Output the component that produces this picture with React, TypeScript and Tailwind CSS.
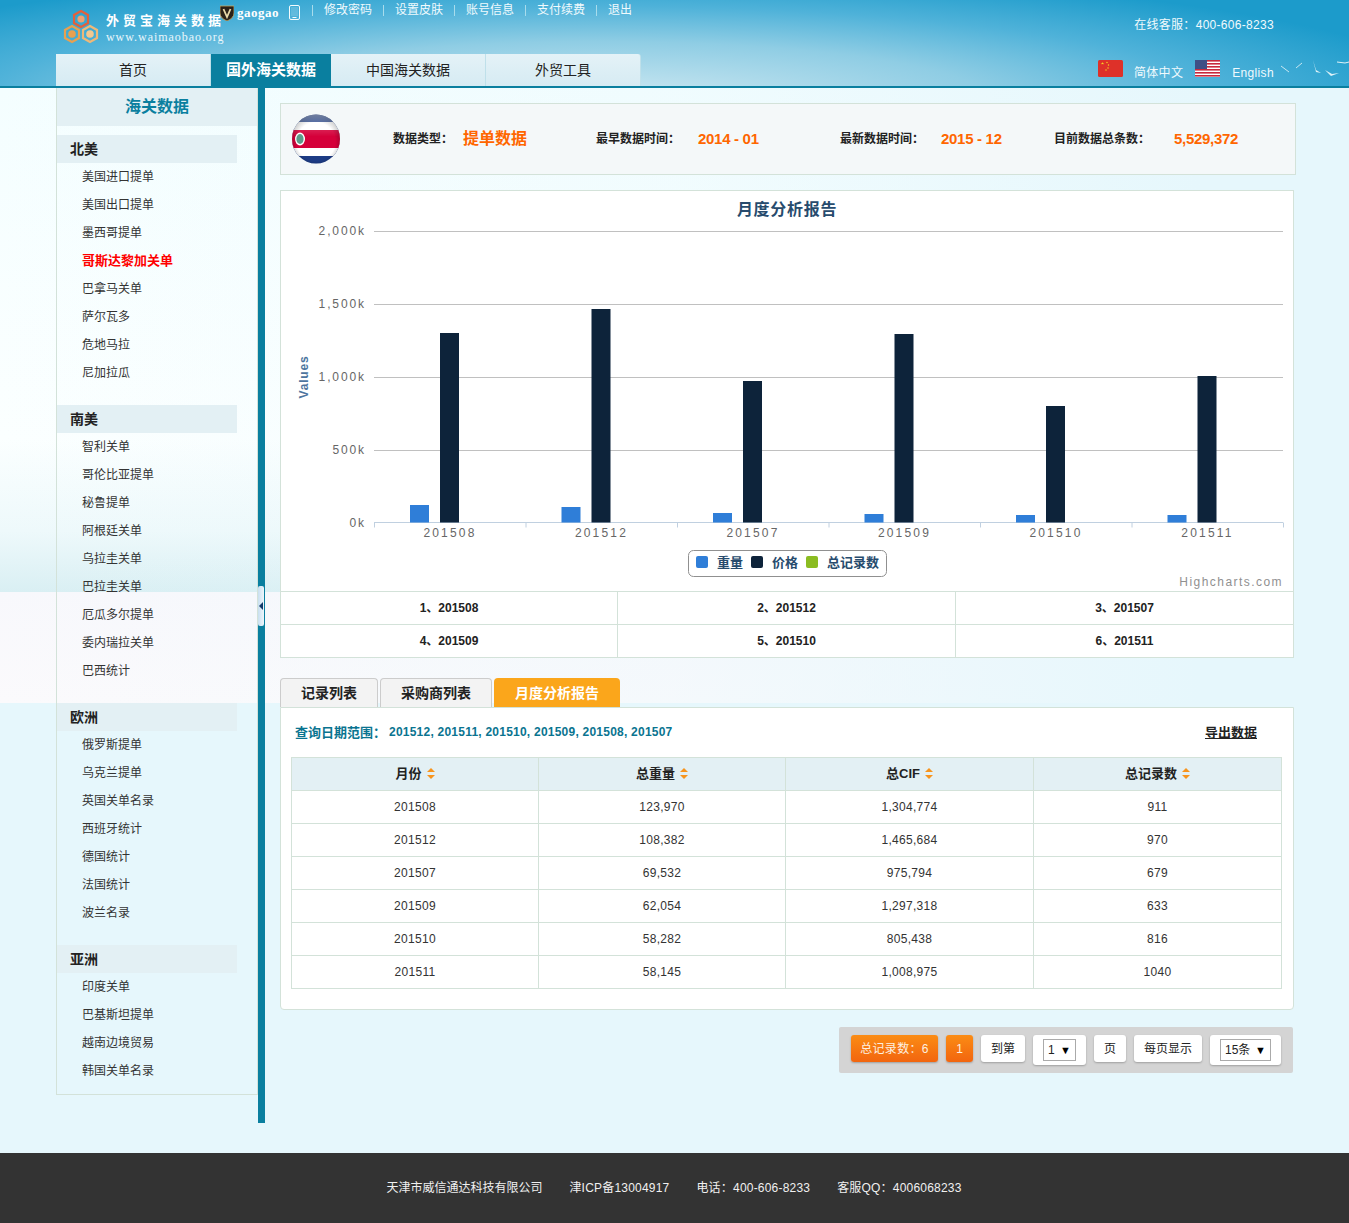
import React from "react";

const groups: { name: string; items: string[] }[] = [
  { name: "北美", items: ["美国进口提单", "美国出口提单", "墨西哥提单", "哥斯达黎加关单", "巴拿马关单", "萨尔瓦多", "危地马拉", "尼加拉瓜"] },
  { name: "南美", items: ["智利关单", "哥伦比亚提单", "秘鲁提单", "阿根廷关单", "乌拉圭关单", "巴拉圭关单", "厄瓜多尔提单", "委内瑞拉关单", "巴西统计"] },
  { name: "欧洲", items: ["俄罗斯提单", "乌克兰提单", "英国关单名录", "西班牙统计", "德国统计", "法国统计", "波兰名录"] },
  { name: "亚洲", items: ["印度关单", "巴基斯坦提单", "越南边境贸易", "韩国关单名录"] },
];

const rows = [
  ["201508", "123,970", "1,304,774", "911"],
  ["201512", "108,382", "1,465,684", "970"],
  ["201507", "69,532", "975,794", "679"],
  ["201509", "62,054", "1,297,318", "633"],
  ["201510", "58,282", "805,438", "816"],
  ["201511", "58,145", "1,008,975", "1040"],
];
const weights = [123970, 108382, 69532, 62054, 58282, 58145];
const prices = [1304774, 1465684, 975794, 1297318, 805438, 1008975];

function Bar({ x, value, fill }: { x: number; value: number; fill: string }) {
  const base = 331.5;
  const top = Math.ceil(base - value * (291.5 / 2000000));
  return <rect x={x} y={top} width="19" height={base - top} fill={fill} />;
}

function Chart() {
  const base = 331.5;
  const cw = 151.5;
  return (
    <svg width="1012" height="400" viewBox="0 0 1012 400" className="block">
      <text x="506" y="24" textAnchor="middle" fontSize="16" fontWeight="700" letterSpacing="0.7" fill="#274b6d">月度分析报告</text>
      {[0, 1, 2, 3].map((i) => (
        <line key={i} x1="93" x2="1002" y1={40.5 + i * 73} y2={40.5 + i * 73} stroke="#c0c0c0" />
      ))}
      {["2,000k", "1,500k", "1,000k", "500k", "0k"].map((t, i) => (
        <text key={t} x="85" y={44 + i * 73} textAnchor="end" fontSize="12" letterSpacing="1.9" fill="#666">{t}</text>
      ))}
      <text x="0" y="0" transform="translate(27 186) rotate(-90)" textAnchor="middle" fontSize="12" fontWeight="700" letterSpacing="0.8" fill="#4d759e">Values</text>
      <line x1="93" x2="1002" y1={base} y2={base} stroke="#c0d0e0" />
      {[0, 1, 2, 3, 4, 5, 6].map((i) => (
        <line key={i} x1={93.5 + i * cw} x2={93.5 + i * cw} y1={base} y2={base + 5} stroke="#c0d0e0" />
      ))}
      {rows.map((r, i) => (
        <g key={r[0]}>
          <Bar x={129 + i * cw} value={weights[i]} fill="#2f7ed8" />
          <Bar x={159 + i * cw} value={prices[i]} fill="#0d233a" />
          <text x={169 + i * cw} y="346" textAnchor="middle" fontSize="12" letterSpacing="2.2" fill="#666">{r[0]}</text>
        </g>
      ))}
      <rect x="407.5" y="359.5" width="198" height="26" rx="5" fill="#fff" stroke="#909090" />
      <rect x="415" y="365" width="12" height="12" rx="2" fill="#2f7ed8" />
      <text x="436" y="376" fontSize="13" fontWeight="700" fill="#274b6d">重量</text>
      <rect x="470" y="365" width="12" height="12" rx="2" fill="#0d233a" />
      <text x="491" y="376" fontSize="13" fontWeight="700" fill="#274b6d">价格</text>
      <rect x="525" y="365" width="12" height="12" rx="2" fill="#8bbc21" />
      <text x="546" y="376" fontSize="13" fontWeight="700" fill="#274b6d">总记录数</text>
      <text x="1002" y="395" textAnchor="end" fontSize="12" letterSpacing="1.45" fill="#909090">Highcharts.com</text>
    </svg>
  );
}

function Logo() {
  const hex = "M0 -8 L7 -4 L7 4 L0 8 L-7 4 L-7 -4 Z";
  return (
    <svg width="40" height="46" viewBox="0 0 40 46" className="block">
      <g transform="translate(19 11)"><path d={hex} fill="none" stroke="#e2603c" strokeWidth="2.2" /><circle r="3.6" fill="#f0a070" /></g>
      <g transform="translate(10 26)"><path d={hex} fill="none" stroke="#e8a050" strokeWidth="2.2" /><circle r="3.8" fill="#e8a050" /></g>
      <g transform="translate(28 26)"><path d={hex} fill="none" stroke="#efb878" strokeWidth="2.2" /><circle r="3.8" fill="#f3c890" /></g>
    </svg>
  );
}

function CostaRica() {
  return (
    <svg width="50" height="50" viewBox="0 0 50 50" className="block">
      <defs>
        <clipPath id="crc"><ellipse cx="25" cy="25" rx="24" ry="24.5" /></clipPath>
        <radialGradient id="crg" cx="50%" cy="55%" r="55%">
          <stop offset="70%" stopColor="#000" stopOpacity="0" />
          <stop offset="100%" stopColor="#000" stopOpacity="0.3" />
        </radialGradient>
        <linearGradient id="crs" x1="0" y1="0" x2="0" y2="1">
          <stop offset="0%" stopColor="#fff" stopOpacity="0.4" />
          <stop offset="45%" stopColor="#fff" stopOpacity="0" />
        </linearGradient>
      </defs>
      <g clipPath="url(#crc)">
        <rect width="50" height="50" fill="#1d3c85" />
        <rect y="8" width="50" height="34" fill="#fff" />
        <rect y="16" width="50" height="18" fill="#d5003a" />
        <ellipse cx="9" cy="25" rx="5" ry="6.5" fill="#fff" />
        <ellipse cx="9" cy="25" rx="3.6" ry="5" fill="#5b9a8a" />
        <rect width="50" height="50" fill="url(#crg)" />
        <rect width="50" height="50" fill="url(#crs)" />
      </g>
    </svg>
  );
}

function SortIcon() {
  return (
    <svg width="8" height="11" viewBox="0 0 8 11" className="inline-block ml-[5px] align-[-1px]">
      <path d="M4 0 L8 4 L0 4 Z" fill="#f7941d" />
      <path d="M4 11 L8 7 L0 7 Z" fill="#f7941d" />
    </svg>
  );
}

function PagerBtn({ children, className }: { children: React.ReactNode; className: string }) {
  return (
    <div className={"h-[27px] flex items-center justify-center rounded-[3px] bg-white text-[#222] shadow-[0_1px_2px_rgba(0,0,0,0.25)] " + className}>
      {children}
    </div>
  );
}

export default function App() {
  return (
    <div className="w-full text-xs text-[#222] font-[Liberation_Sans,Noto_Sans_CJK_SC,sans-serif]">
      <header className="relative h-[88px] border-b-2 border-[#0a7f9f] overflow-hidden bg-[radial-gradient(ellipse_860px_130px_at_600px_100px,#cfe9f2_0%,#8fcde4_45%,#4fb2d9_72%,#1c9bcb_100%)]">
        <svg width="150" height="30" viewBox="0 0 150 30" className="absolute right-0 top-[56px]">
          <path d="M82 10 l8 6 M97 12 l6 -5" stroke="#c8e8f2" strokeWidth="1" fill="none" />
          <path d="M114 4 l3 10 l5 3 l-5 -1 Z" fill="#dff2f8" />
          <path d="M126 14 l6 6 l8 -3 l-7 1 Z" fill="#dff2f8" />
          <path d="M138 6 l8 1 l4 -1" stroke="#dff2f8" strokeWidth="1" fill="none" />
        </svg>
        <div className="flex h-[54px] pl-[62px] pr-[75px]">
          <div className="pt-[8px] w-[44px] shrink-0"><Logo /></div>
          <div className="w-[114px] pt-[13px] shrink-0">
            <div className="text-[13px] leading-[16px] font-bold text-white tracking-[4px] whitespace-nowrap">外贸宝海关数据</div>
            <div className="text-[12px] leading-[16px] text-[#e8f6fb] tracking-[0.95px] whitespace-nowrap font-[Liberation_Serif,serif]">www.waimaobao.org</div>
          </div>
          <div className="pt-[5px] shrink-0 flex items-start">
            <svg width="14" height="16" viewBox="0 0 14 16" className="block">
              <path d="M0 1 L14 1 L14 8 Q14 13 7 16 Q0 13 0 8 Z" fill="#2a2118" stroke="#c8a860" strokeWidth="0.8" />
              <path d="M3.5 4 L7 12 L10.5 4" fill="none" stroke="#e8d8a8" strokeWidth="1.8" />
            </svg>
            <span className="ml-[3px] font-bold text-white leading-[16px] font-[Liberation_Serif,serif] text-[13px] tracking-[0.5px]">gaogao</span>
            <svg width="11" height="15" viewBox="0 0 11 15" className="block ml-[10px]">
              <rect x="0.5" y="0.5" width="10" height="14" rx="1.5" fill="none" stroke="#f4fbfd" />
              <rect x="2" y="2" width="7" height="9" fill="#ffffff" fillOpacity="0.15" />
              <rect x="3.5" y="12" width="4" height="1" fill="#f4fbfd" />
            </svg>
          </div>
          <nav className="ml-[12px] flex items-start pt-[2px] text-[#f0fafd] leading-[16px] whitespace-nowrap">
            {["修改密码", "设置皮肤", "账号信息", "支付续费", "退出"].map((t) => (
              <span key={t} className="flex items-center">
                <span className="w-px h-[11px] bg-[#a8dcec] mr-[11px]" />
                <span className="mr-[11px]">{t}</span>
              </span>
            ))}
          </nav>
          <div className="ml-auto pt-[17px] text-[#f0fafd] leading-[16px] tracking-[0.3px] whitespace-nowrap">在线客服：400-606-8233</div>
        </div>
        <div className="flex h-[32px] pl-[56px] pr-[75px]">
          {[
            ["首页", "w-[155px]"],
            ["国外海关数据", "w-[120px]"],
            ["中国海关数据", "w-[155px]"],
            ["外贸工具", "w-[155px]"],
          ].map(([t, w], i) => (
            <div
              key={t}
              className={
                "flex items-center justify-center " + w + " " +
                (i === 1
                  ? "bg-[#0a7f9f] text-white font-bold text-[15px]"
                  : "text-sm bg-[linear-gradient(#e4f2f7,#d6ebf3)] text-[#222] border-r border-[#bfe0ea]") +
                (i === 3 ? " rounded-tr-[3px]" : "")
              }
            >
              {t}
            </div>
          ))}
          <div className="ml-auto flex items-start pt-[6px] text-[#f0fafd] whitespace-nowrap">
            <svg width="25" height="17" viewBox="0 0 25 17" className="block">
              <rect width="25" height="17" rx="1.5" fill="#de3129" />
              <path d="M4.5 2 l1 2.6 l-2.8 -1.6 h3.6 l-2.8 1.6 Z" fill="#f8d820" />
              <circle cx="9" cy="2.5" r="0.7" fill="#f8d820" />
              <circle cx="10.5" cy="5" r="0.7" fill="#f8d820" />
              <circle cx="10" cy="8" r="0.7" fill="#f8d820" />
              <circle cx="8" cy="10" r="0.7" fill="#f8d820" />
            </svg>
            <span className="ml-[11px] mt-[5px] leading-[16px] tracking-[0.3px]">简体中文</span>
            <svg width="25" height="17" viewBox="0 0 25 17" className="block ml-[12px]">
              <rect width="25" height="17" fill="#fff" />
              {[0, 1, 2, 3, 4, 5].map((i) => (
                <rect key={i} y={i * 3} width="25" height="1.6" fill="#c8283c" />
              ))}
              <rect width="12" height="9" fill="#3f4f85" />
            </svg>
            <span className="ml-[12px] mt-[5px] leading-[16px] tracking-[0.35px]">English</span>
          </div>
        </div>
      </header>

      <div className="bg-[#e6f7fc] bg-no-repeat bg-[length:100%_615px] bg-[linear-gradient(90deg,rgba(230,247,252,0)_0%,rgba(230,247,252,0.3)_50%,#e6f7fc_89%),linear-gradient(#f4feff_0%,#fbffff_57%,#eef9fb_72%,#d9eff3_82%,#f8f8fc_82%,#fbfafc_100%)] pb-[30px]">
        <div className="flex pl-[56px] h-[1035px]">
          <aside className="w-[202px] h-[1007px] shrink-0 border-l border-r border-b border-[#d3e2d9]">
            <div className="h-[38px] bg-[#e3f0f4] text-[#0a7f9f] text-base font-bold flex items-center justify-center">海关数据</div>
            <div className="pt-[9px]">
              {groups.map((g, gi) => (
                <div key={g.name} className={gi > 0 ? "mt-[18px]" : ""}>
                  <div className="w-[180px] h-[28px] bg-[#e3f0f4] pl-[13px] pb-[1px] flex items-center text-sm font-bold text-[#222]">{g.name}</div>
                  {g.items.map((it) => (
                    <div key={it} className={"h-[28px] pl-[25px] flex items-center " + (it === "哥斯达黎加关单" ? "text-[#ff0000] font-bold text-[13px]" : "text-[#333]")}>
                      {it}
                    </div>
                  ))}
                </div>
              ))}
            </div>
          </aside>
          <div className="relative w-[7px] shrink-0 bg-[#0a7f9f]">
            <div className="absolute left-0 top-[498px] w-[6px] h-[40px] rounded-[2px] bg-[linear-gradient(90deg,#c8dff0,#eef6fb)] flex items-center justify-center">
              <svg width="4" height="8" viewBox="0 0 4 8" className="block"><path d="M4 0 L0 4 L4 8 Z" fill="#123a6a" /></svg>
            </div>
          </div>
          <main className="ml-[15px] w-[1016px] pt-[15px] flex flex-col items-start">
            <section className="w-[1016px] h-[72px] shrink-0 border border-[#d3e2d9] bg-[#f4f8f9] flex items-center">
              <div className="ml-[10px] w-[50px]"><CostaRica /></div>
              <b className="ml-[52px] w-[70px] whitespace-nowrap">数据类型：</b>
              <b className="text-[#ff6600] text-base w-[133px] whitespace-nowrap">提单数据</b>
              <b className="w-[102px] whitespace-nowrap">最早数据时间：</b>
              <b className="text-[#ff6600] text-[15px] tracking-[-0.3px] w-[142px] whitespace-nowrap">2014 - 01</b>
              <b className="w-[101px] whitespace-nowrap">最新数据时间：</b>
              <b className="text-[#ff6600] text-[15px] tracking-[-0.3px] w-[113px] whitespace-nowrap">2015 - 12</b>
              <b className="w-[120px] whitespace-nowrap">目前数据总条数：</b>
              <b className="text-[#ff6600] text-[15px] tracking-[-0.3px] whitespace-nowrap">5,529,372</b>
            </section>

            <section className="w-[1014px] h-[468px] shrink-0 mt-[15px] border border-[#d3e2d9] bg-white">
              <Chart />
              <div className="grid grid-cols-[337px_338px_337px] font-bold text-[#222]">
                {rows.map((r, i) => (
                  <div
                    key={r[0]}
                    className={"h-[33px] flex items-center justify-center border-t border-[#d3e2d9] " + (i % 3 !== 2 ? "border-r" : "")}
                  >
                    {i + 1}、{r[0]}
                  </div>
                ))}
              </div>
            </section>

            <div className="flex gap-[2px] mt-[20px] h-[29px] shrink-0 font-bold text-sm">
              <div className="w-[98px] rounded-t-[4px] border border-b-0 border-[#cccccc] bg-[#f3f3f3] flex items-center justify-center">记录列表</div>
              <div className="w-[112px] rounded-t-[4px] border border-b-0 border-[#cccccc] bg-[#f3f3f3] flex items-center justify-center">采购商列表</div>
              <div className="w-[126px] rounded-t-[4px] bg-[#fba61b] text-white flex items-center justify-center">月度分析报告</div>
            </div>

            <section className="w-[1014px] shrink-0 border border-[#d3e2d9] rounded-b-[4px] bg-white pb-[20px]">
              <div className="h-[49px] flex items-center justify-between pl-[14px] pr-[36px] font-bold">
                <span className="text-[#0a7490] flex items-center whitespace-nowrap">
                  <span className="text-[13px] w-[94px]">查询日期范围：</span>
                  <span className="tracking-[0.23px]">201512, 201511, 201510, 201509, 201508, 201507</span>
                </span>
                <span className="underline text-[#222] text-[13px]">导出数据</span>
              </div>
              <table className="ml-[10px] w-[990px] table-fixed border-collapse text-center">
                <thead>
                  <tr className="h-[33px] bg-[#e3f0f4] font-bold text-[13px]">
                    {["月份", "总重量", "总CIF", "总记录数"].map((h, i) => (
                      <th key={h} className={"border border-[#d3e2d9] " + (i === 2 ? "w-[248px]" : i === 3 ? "w-[248px]" : "w-[247px]")}>
                        {h}
                        <SortIcon />
                      </th>
                    ))}
                  </tr>
                </thead>
                <tbody>
                  {rows.map((r) => (
                    <tr key={r[0]} className="h-[33px]">
                      {r.map((c, i) => (
                        <td key={i} className="border border-[#d3e2d9] tracking-[0.3px] text-[#333]">{c}</td>
                      ))}
                    </tr>
                  ))}
                </tbody>
              </table>
            </section>

            <div className="self-end mr-[3px] mt-[17px] w-[454px] h-[46px] shrink-0 rounded-[2px] bg-[#d4d4d4] flex items-start pt-[8px] pl-[12px] gap-[8px] whitespace-nowrap">
              <div className="w-[87px] h-[27px] rounded-[3px] bg-[linear-gradient(#fb8c14,#f2650f)] text-[#fdf0e0] flex items-center justify-center tracking-[0.3px] shadow-[0_1px_2px_rgba(0,0,0,0.25)]">总记录数：6</div>
              <div className="w-[27px] h-[27px] rounded-[3px] bg-[linear-gradient(#fb8c14,#f2650f)] text-[#fdf0e0] flex items-center justify-center shadow-[0_1px_2px_rgba(0,0,0,0.25)]">1</div>
              <PagerBtn className="w-[44px]">到第</PagerBtn>
              <div className="w-[53px] h-[30px] rounded-[3px] bg-white shadow-[0_1px_2px_rgba(0,0,0,0.25)] flex items-center justify-center">
                <div className="w-[33px] h-[22px] border border-[#aaaaaa] flex items-center justify-between px-[4px]">
                  <span>1</span><span className="text-[11px] text-black">▼</span>
                </div>
              </div>
              <PagerBtn className="w-[32px]">页</PagerBtn>
              <PagerBtn className="w-[68px]">每页显示</PagerBtn>
              <div className="w-[71px] h-[30px] rounded-[3px] bg-white shadow-[0_1px_2px_rgba(0,0,0,0.25)] flex items-center justify-center">
                <div className="w-[51px] h-[22px] border border-[#aaaaaa] flex items-center justify-between px-[4px]">
                  <span>15条</span><span className="text-[11px] text-black">▼</span>
                </div>
              </div>
            </div>
          </main>
        </div>
      </div>

      <footer className="h-[70px] bg-[#333333] text-[#f0f0f0] flex items-center justify-center whitespace-nowrap gap-[27px] pr-[1px]">
        <span>天津市威信通达科技有限公司</span>
        <span className="tracking-[0.2px]">津ICP备13004917</span>
        <span className="tracking-[0.2px]">电话：400-606-8233</span>
        <span className="tracking-[0.2px]">客服QQ：4006068233</span>
      </footer>
    </div>
  );
}
